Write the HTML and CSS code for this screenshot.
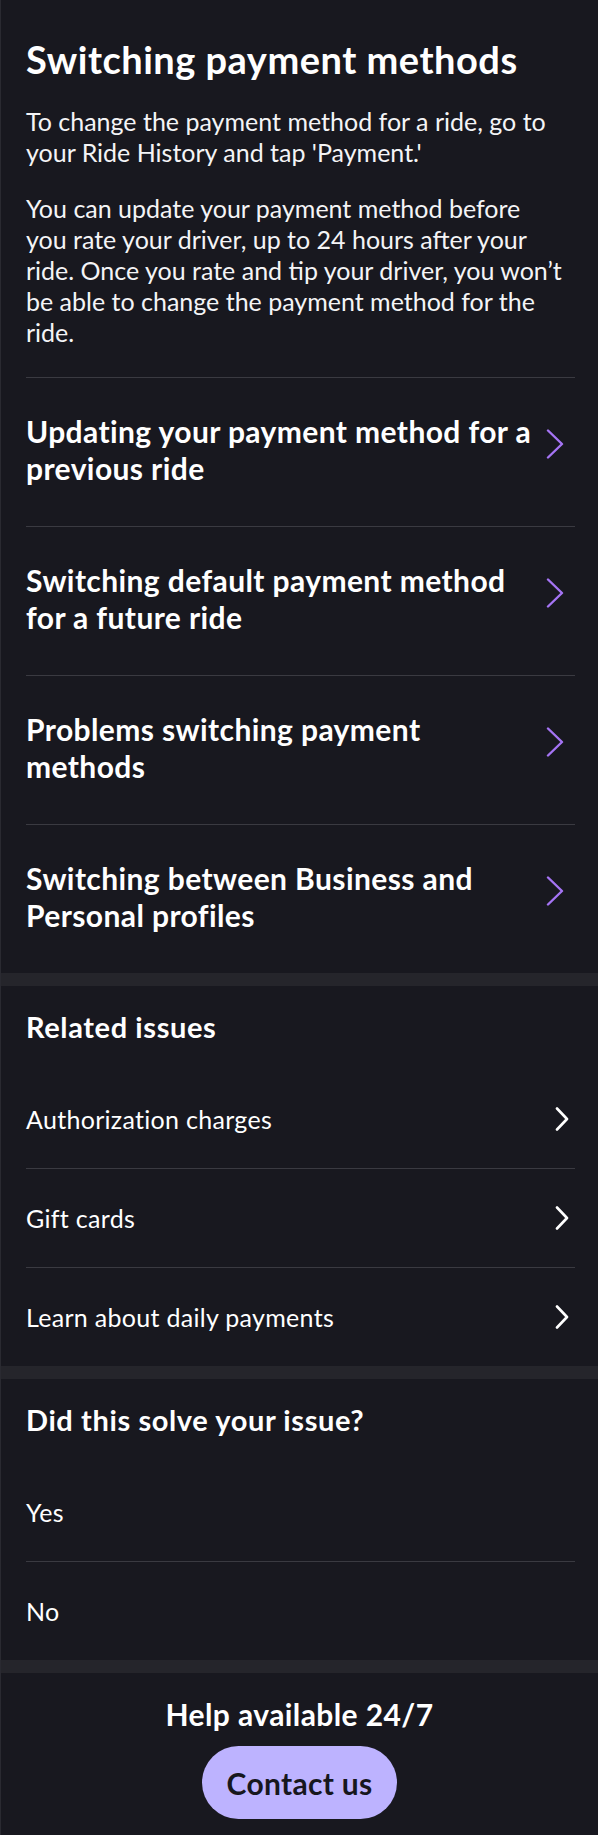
FILE: index.html
```html
<!DOCTYPE html>
<html lang="en">
<head>
<meta charset="utf-8">
<title>Switching payment methods</title>
<link rel="stylesheet" href="styles.css">
</head>
<body>
<main class="page">
  <section class="article">
    <h1 class="title">Switching payment methods</h1>
    <p class="para">To change the payment method for a ride, go to<br>your Ride History and tap 'Payment.'</p>
    <p class="para">You can update your payment method before<br>you rate your driver, up to 24 hours after your<br>ride. Once you rate and tip your driver, you won’t<br>be able to change the payment method for the<br>ride.</p>
    <ul class="topics">
      <li class="topic"><span class="topic-text">Updating your payment method for a previous ride</span>
        <svg class="chev-purple" viewBox="0 0 18 30" width="18" height="30"><polyline points="2,1.5 16,15 2,28.5" /></svg></li>
      <li class="topic"><span class="topic-text">Switching default payment method for a future ride</span>
        <svg class="chev-purple" viewBox="0 0 18 30" width="18" height="30"><polyline points="2,1.5 16,15 2,28.5" /></svg></li>
      <li class="topic"><span class="topic-text">Problems switching payment methods</span>
        <svg class="chev-purple" viewBox="0 0 18 30" width="18" height="30"><polyline points="2,1.5 16,15 2,28.5" /></svg></li>
      <li class="topic"><span class="topic-text">Switching between Business and Personal profiles</span>
        <svg class="chev-purple" viewBox="0 0 18 30" width="18" height="30"><polyline points="2,1.5 16,15 2,28.5" /></svg></li>
    </ul>
  </section>

  <section class="block">
    <h2 class="block-title">Related issues</h2>
    <ul class="rows">
      <li class="row"><span>Authorization charges</span><svg class="chev-white" viewBox="0 0 14 24" width="14" height="24"><polyline points="2,1.5 12,12 2,22.5" /></svg></li>
      <li class="row"><span>Gift cards</span><svg class="chev-white" viewBox="0 0 14 24" width="14" height="24"><polyline points="2,1.5 12,12 2,22.5" /></svg></li>
      <li class="row"><span>Learn about daily payments</span><svg class="chev-white" viewBox="0 0 14 24" width="14" height="24"><polyline points="2,1.5 12,12 2,22.5" /></svg></li>
    </ul>
  </section>

  <section class="block">
    <h2 class="block-title">Did this solve your issue?</h2>
    <ul class="rows">
      <li class="row"><span>Yes</span></li>
      <li class="row"><span>No</span></li>
    </ul>
  </section>

  <footer class="help">
    <h2 class="help-title">Help available 24/7</h2>
    <button class="contact" type="button">Contact us</button>
  </footer>
</main>
</body>
</html>
```

FILE: styles.css
```css
* { box-sizing: border-box; }
html, body { margin: 0; padding: 0; background: #18181f; }
body {
  font-family: Lato, "Noto Sans", "Liberation Sans", sans-serif;
  color: #ffffff;
}
.page {
  border-left: 1px solid #2a2a31;
  background: #18181f;
  min-height: 1835px;
}
.article { padding: 37px 23px 0 25px; }
.title {
  margin: 0;
  font-size: 38px;
  line-height: 44px;
  font-weight: 700;
  letter-spacing: 0.5px;
}
.para {
  margin: 25px 0 0;
  font-size: 25px;
  line-height: 31px;
  font-weight: 400;
  color: #f4f4f6;
}
.topics {
  list-style: none;
  margin: 29px 0 0;
  padding: 0;
}
.topic {
  display: flex;
  align-items: center;
  gap: 4px;
  border-top: 1px solid #3a3a41;
  padding: 35px 0 39px;
}
.topic-text {
  flex: 1;
  font-size: 30px;
  line-height: 37px;
  font-weight: 700;
  letter-spacing: 0.4px;
}
.chev-purple {
  flex: none;
  margin: 0 11px 13px 0;
  fill: none;
  stroke: #a574f4;
  stroke-width: 2.4;
  stroke-linecap: round;
  stroke-linejoin: round;
}
.block {
  border-top: 13px solid #25252b;
  padding: 22px 23px 0 25px;
}
.block-title {
  margin: 0 0 24px;
  font-size: 29px;
  line-height: 37px;
  font-weight: 700;
  letter-spacing: 0.6px;
}
.rows { list-style: none; margin: 0; padding: 0; }
.row {
  display: flex;
  align-items: center;
  justify-content: space-between;
  height: 99px;
  font-size: 25px;
  line-height: 30px;
  letter-spacing: 0.3px;
}
.row + .row { border-top: 1px solid #3a3a41; }
.chev-white {
  flex: none;
  margin-right: 6px;
  fill: none;
  stroke: #ffffff;
  stroke-width: 2.6;
  stroke-linecap: round;
  stroke-linejoin: round;
}
.help {
  border-top: 13px solid #25252b;
  padding: 25px 0 14px;
  display: flex;
  flex-direction: column;
  align-items: center;
  gap: 16px;
}
.help-title {
  margin: 0;
  font-size: 30px;
  line-height: 32px;
  font-weight: 700;
  letter-spacing: 0.4px;
}
.contact {
  width: 195px;
  height: 73px;
  border: none;
  border-radius: 37px;
  background: #bdb3ff;
  color: #17171d;
  font-family: Lato, "Noto Sans", sans-serif;
  font-size: 30px;
  font-weight: 700;
  letter-spacing: 0.3px;
  padding: 0;
}
```
